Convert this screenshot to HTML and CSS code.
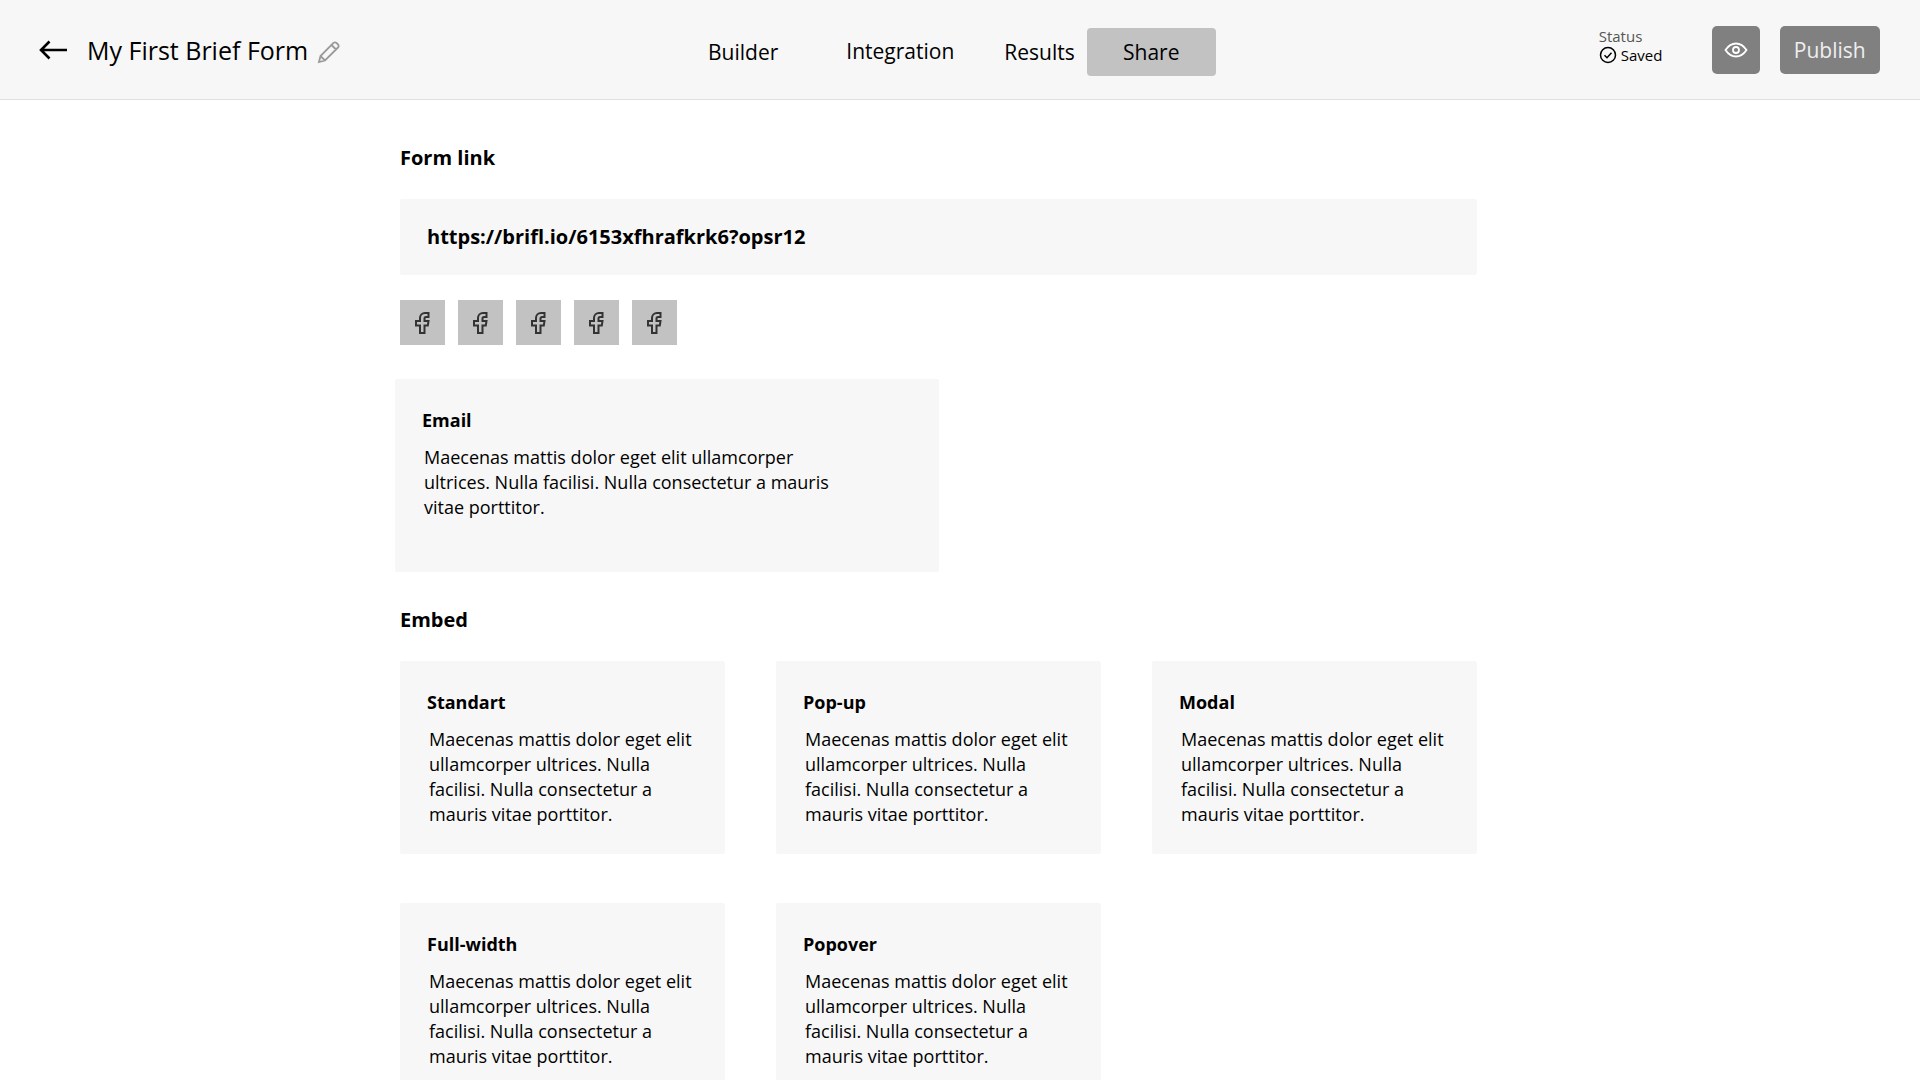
FILE: index.html
```html
<!DOCTYPE html>
<html lang="en">
<head>
  <meta charset="UTF-8" />
  <title>My First Brief Form</title>
  <link rel="stylesheet" href="styles.css">
</head>
<body>
  <div class="topbar">
    <div class="form-title">
      <svg class="back-icon" width="28" height="20" viewBox="0 0 28 20" fill="none" stroke="#000" stroke-width="2.6"><path d="M28 10H2M10.500 1.500L2 10l8.500 8.500"/></svg>
      <span class="form-name">My First Brief Form</span>
      <svg class="edit-icon" width="24" height="24" viewBox="0 0 24 24" fill="none" stroke="#9a9a9a" stroke-width="1.800"><path d="M2 22l1.500-6L16.500 3a2 2 0 0 1 3 0l1.500 1.500a2 2 0 0 1 0 3L8 20.500zM3.500 16L8 20.500M14.500 5l4.500 4.500"/></svg>
    </div>
    <div class="tabs">
      <span class="tab tab-builder">Builder</span>
      <span class="tab tab-integration">Integration</span>
      <span class="tab tab-results">Results</span>
      <span class="tab tab-share">Share</span>
    </div>
    <div class="actions">
      <div class="status">
        <div class="status-label">Status</div>
        <div class="status-value">
          <svg width="18" height="18" viewBox="0 0 18 18" fill="none" stroke="#000" stroke-width="1.500"><circle cx="9" cy="9" r="7.500"/><path d="M5.500 9.200l2.500 2.500 4.500-5"/></svg>
          Saved
        </div>
      </div>
      <button class="btn-preview">
        <svg width="24" height="16" viewBox="0 0 24 16" fill="none" stroke="#fff" stroke-width="1.800"><path d="M1.500 8C4.500 3.500 8 1.500 12 1.500S19.500 3.500 22.500 8C19.500 12.500 16 14.500 12 14.500S4.500 12.500 1.500 8z"/><circle cx="12" cy="8" r="3"/></svg>
      </button>
      <button class="btn-publish">Publish</button>
    </div>
  </div>

  <div class="content">
    <h2 class="section-title">Form link</h2>
    <div class="link-box">https://brifl.io/6153xfhrafkrk6?opsr12</div>

    <div class="socials">
      <span class="social"><svg width="20" height="24" viewBox="0 0 20 24" fill="none" stroke="#333" stroke-width="2"><path d="M7 22V14.500H3V10H7V7a5 5 0 0 1 5-5h3.500V6H13a1.500 1.500 0 0 0-1.500 1.500V10h4L14.800 14.500h-3.300V22z"/></svg></span>
      <span class="social"><svg width="20" height="24" viewBox="0 0 20 24" fill="none" stroke="#333" stroke-width="2"><path d="M7 22V14.500H3V10H7V7a5 5 0 0 1 5-5h3.500V6H13a1.500 1.500 0 0 0-1.500 1.500V10h4L14.800 14.500h-3.300V22z"/></svg></span>
      <span class="social"><svg width="20" height="24" viewBox="0 0 20 24" fill="none" stroke="#333" stroke-width="2"><path d="M7 22V14.500H3V10H7V7a5 5 0 0 1 5-5h3.500V6H13a1.500 1.500 0 0 0-1.500 1.500V10h4L14.800 14.500h-3.300V22z"/></svg></span>
      <span class="social"><svg width="20" height="24" viewBox="0 0 20 24" fill="none" stroke="#333" stroke-width="2"><path d="M7 22V14.500H3V10H7V7a5 5 0 0 1 5-5h3.500V6H13a1.500 1.500 0 0 0-1.500 1.500V10h4L14.800 14.500h-3.300V22z"/></svg></span>
      <span class="social"><svg width="20" height="24" viewBox="0 0 20 24" fill="none" stroke="#333" stroke-width="2"><path d="M7 22V14.500H3V10H7V7a5 5 0 0 1 5-5h3.500V6H13a1.500 1.500 0 0 0-1.500 1.500V10h4L14.800 14.500h-3.300V22z"/></svg></span>
    </div>

    <div class="card card-email">
      <h3>Email</h3>
      <p>Maecenas mattis dolor eget elit ullamcorper ultrices. Nulla facilisi. Nulla consectetur a mauris vitae porttitor.</p>
    </div>

    <h2 class="section-title embed-title">Embed</h2>
    <div class="embed-grid">
      <div class="card">
        <h3>Standart</h3>
        <p>Maecenas mattis dolor eget elit ullamcorper ultrices. Nulla facilisi. Nulla consectetur a mauris vitae porttitor.</p>
      </div>
      <div class="card">
        <h3>Pop-up</h3>
        <p>Maecenas mattis dolor eget elit ullamcorper ultrices. Nulla facilisi. Nulla consectetur a mauris vitae porttitor.</p>
      </div>
      <div class="card">
        <h3>Modal</h3>
        <p>Maecenas mattis dolor eget elit ullamcorper ultrices. Nulla facilisi. Nulla consectetur a mauris vitae porttitor.</p>
      </div>
      <div class="card">
        <h3>Full-width</h3>
        <p>Maecenas mattis dolor eget elit ullamcorper ultrices. Nulla facilisi. Nulla consectetur a mauris vitae porttitor.</p>
      </div>
      <div class="card">
        <h3>Popover</h3>
        <p>Maecenas mattis dolor eget elit ullamcorper ultrices. Nulla facilisi. Nulla consectetur a mauris vitae porttitor.</p>
      </div>
    </div>
  </div>
</body>
</html>
```

FILE: styles.css
```css
html, body {
  height: 1080px;
  overflow: hidden;
}

body {
  margin: 0;
  font-family: "Open Sans", sans-serif;
  color: #000;
  background-color: #fff;
}

.topbar {
  height: 99px;
  background-color: #f7f7f7;
  border-bottom: 1px solid #e0e0e0;
  display: flex;
  align-items: center;
  padding: 0 39px;
}

.form-title {
  display: flex;
  align-items: center;
  width: 669px;
}

.back-icon {
  margin-right: 20px;
}

.form-name {
  font-size: 25px;
  font-weight: 500;
}

.edit-icon {
  margin: 5px 0 0 9px;
}

.tabs {
  display: flex;
  align-items: center;
  margin-top: 5px;
  font-size: 21px;
  font-weight: 500;
}

.tab-builder {
  margin-right: 68px;
}

.tab-integration {
  margin-right: 50px;
  margin-bottom: 2px;
}

.tab-results {
  margin-right: 12px;
}

.tab-share {
  width: 129px;
  height: 48px;
  display: flex;
  align-items: center;
  justify-content: center;
  background-color: #c2c2c2;
  border-radius: 4px;
}

.actions {
  display: flex;
  align-items: center;
  margin-left: 383px;
}

.status {
  width: 113px;
  margin-bottom: 8px;
}

.status-label {
  font-size: 15px;
  line-height: 18px;
  color: #555;
}

.status-value {
  display: flex;
  align-items: center;
  gap: 4px;
  font-size: 15px;
  line-height: 20px;
  font-weight: 500;
}

.btn-preview, .btn-publish {
  height: 48px;
  border: none;
  border-radius: 5px;
  background-color: #808080;
  color: #fff;
  font-family: inherit;
}

.btn-preview {
  width: 48px;
  padding: 0;
  margin-right: 20px;
  display: flex;
  align-items: center;
  justify-content: center;
}

.btn-publish {
  width: 100px;
  padding: 0;
  font-size: 21px;
  font-weight: 500;
  color: #eee;
}

.content {
  width: 1077px;
  margin-left: 400px;
}

.section-title {
  margin: 0;
  font-size: 20px;
  line-height: 28px;
  font-weight: 700;
}

.content > .section-title:first-child {
  padding-top: 44px;
}

.link-box {
  margin-top: 27px;
  height: 76px;
  box-sizing: border-box;
  padding: 0 0 2px 27px;
  display: flex;
  align-items: center;
  background-color: #f7f7f7;
  border-radius: 2px;
  font-size: 20px;
  font-weight: 700;
}

.socials {
  display: flex;
  gap: 13px;
  margin-top: 25px;
}

.social {
  width: 45px;
  height: 45px;
  display: flex;
  align-items: center;
  justify-content: center;
  background-color: #c2c2c2;
}

.card {
  height: 193px;
  box-sizing: border-box;
  padding: 29px 26px 0 27px;
  background-color: #f7f7f7;
  border-radius: 2px;
}

.card h3 {
  margin: 0;
  font-size: 18px;
  line-height: 25px;
  font-weight: 700;
}

.card p {
  margin: 12px 0 0 2px;
  font-size: 18px;
  line-height: 25px;
}

.card-email {
  width: 544px;
  margin: 34px 0 0 -5px;
  padding-right: 100px;
}

.embed-title {
  margin-top: 34px;
}

.embed-grid {
  display: grid;
  grid-template-columns: repeat(3, 325px);
  column-gap: 51px;
  row-gap: 49px;
  margin-top: 27px;
}
```
